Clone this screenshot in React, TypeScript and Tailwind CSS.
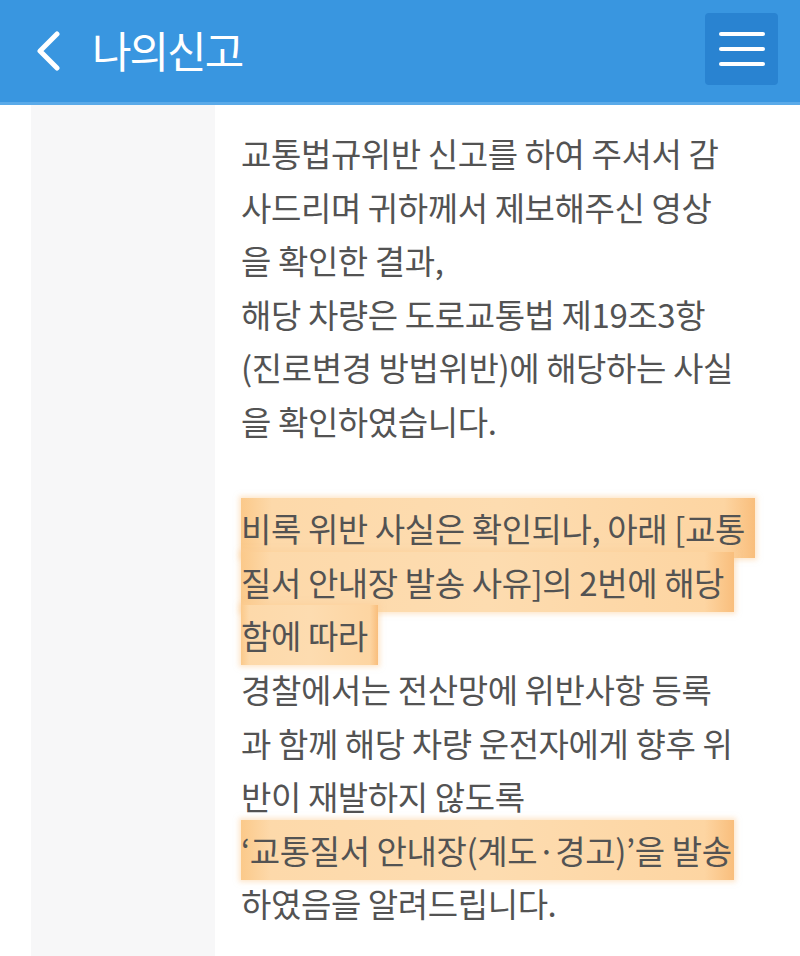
import React from 'react';

const Mark: React.FC<{ children: React.ReactNode; pad?: string }> = ({ children, pad = 'pr-[10px]' }) => (
  <span className={`bg-[linear-gradient(90deg,#fbc98a_0%,#fdd9aa_6%,#fddcb0_50%,#fdd5a2_94%,#f9be7c_100%)] shadow-[0_0_5px_2px_rgba(253,205,150,0.5)] py-[6px] ${pad}`}>
    {children}
  </span>
);

const lines: (React.ReactNode | null)[] = [
  '교통법규위반 신고를 하여 주셔서 감',
  '사드리며 귀하께서 제보해주신 영상',
  '을 확인한 결과,',
  '해당 차량은 도로교통법 제19조3항',
  '(진로변경 방법위반)에 해당하는 사실',
  '을 확인하였습니다.',
  null,
  <Mark>비록 위반 사실은 확인되나, 아래 [교통</Mark>,
  <Mark>질서 안내장 발송 사유]의 2번에 해당</Mark>,
  <Mark>함에 따라</Mark>,
  '경찰에서는 전산망에 위반사항 등록',
  '과 함께 해당 차량 운전자에게 향후 위',
  '반이 재발하지 않도록',
  <Mark pad="pr-[2px]">‘교통질서 안내장(계도·경고)’을 발송</Mark>,
  '하였음을 알려드립니다.',
];

export default function App() {
  return (
    <div className="w-[800px] h-[956px] overflow-hidden bg-white font-['Noto_Sans_CJK_KR','Noto_Sans',sans-serif]">
      <header className="h-[105px] bg-[#3996e0] border-b-[3px] border-[#5aaae9] flex items-center justify-between pl-[34px] pr-[22px]">
        <div className="flex items-center gap-[30px]">
          <svg width="28" height="40" viewBox="0 0 28 40" fill="none">
            <path d="M23 3 L6 20 L23 37" stroke="white" strokeWidth="5" strokeLinecap="round" strokeLinejoin="round" />
          </svg>
          <h1 className="text-white text-[43px] leading-none tracking-[-2px] -mt-1">나의신고</h1>
        </div>
        <button className="w-[73px] h-[72px] -mt-[5px] rounded-[4px] bg-[#2983d1] flex flex-col items-center justify-center gap-[11px]">
          <span className="block w-[46px] h-[4px] rounded-full bg-white" />
          <span className="block w-[46px] h-[4px] rounded-full bg-white" />
          <span className="block w-[46px] h-[4px] rounded-full bg-white" />
        </button>
      </header>
      <div className="flex">
        <aside className="ml-[31px] w-[184px] h-[860px] bg-[#f7f7f8]" />
        <div className="pl-[26px] pt-[22px] text-[#535353] text-[33px] leading-[53.6px] tracking-[-0.4px] whitespace-nowrap">
          {lines.map((l, i) => (
            <div key={i} className="h-[53.6px]">{l}</div>
          ))}
        </div>
      </div>
    </div>
  );
}
